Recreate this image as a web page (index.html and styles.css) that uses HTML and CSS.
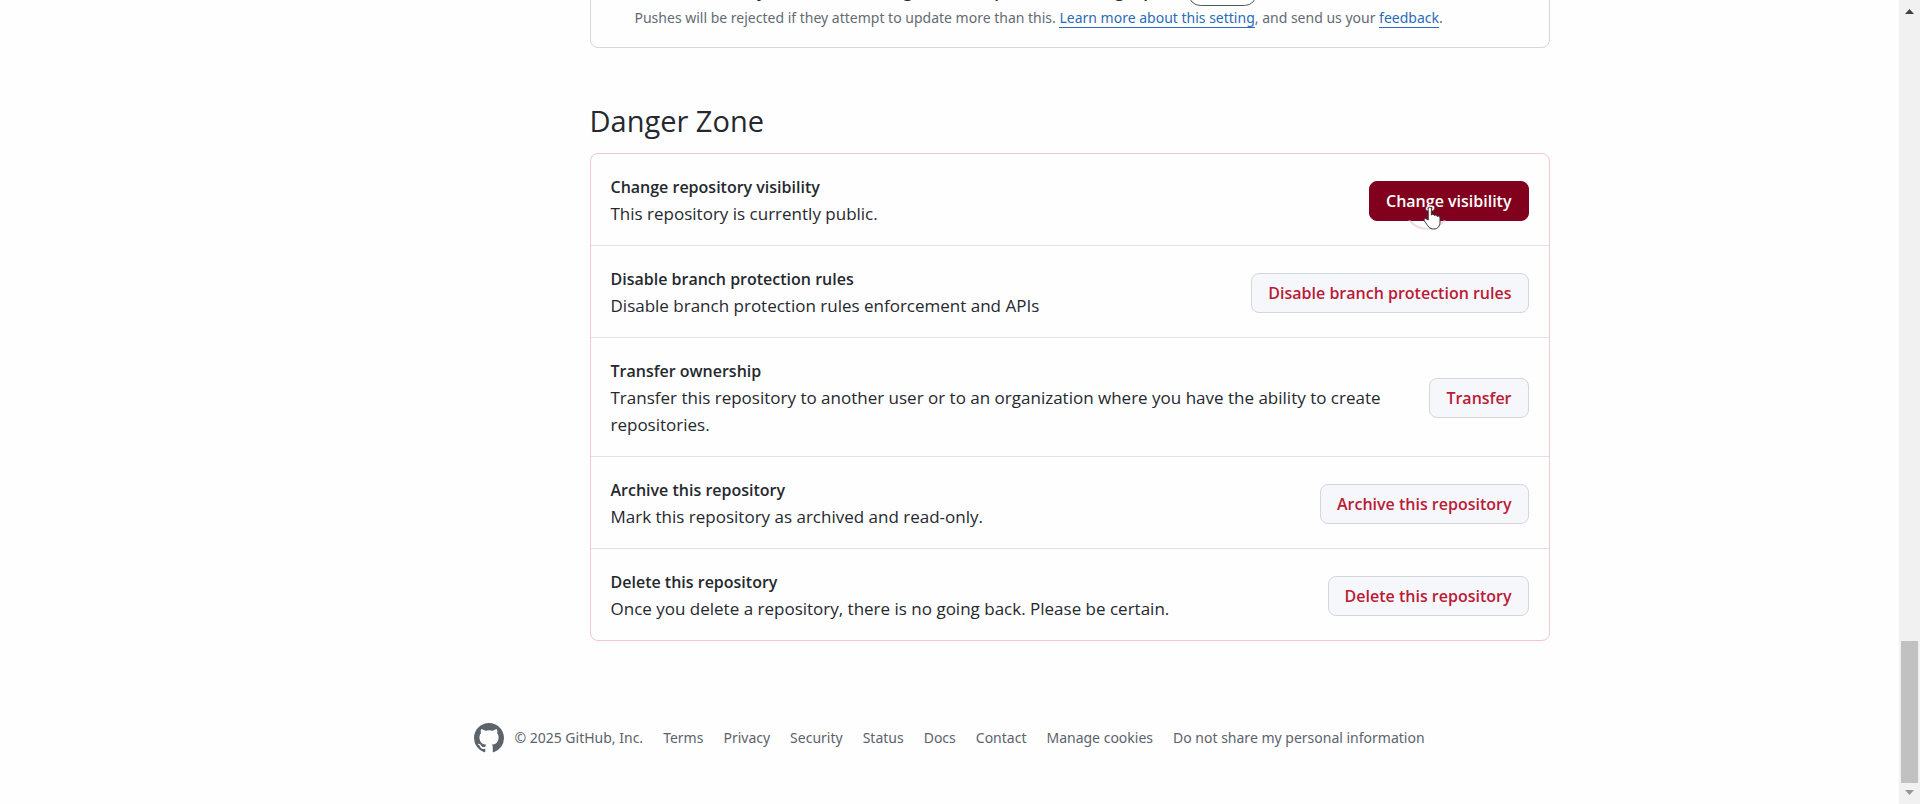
FILE: index.html
```html
<!DOCTYPE html>
<html lang="en">
<head>
<meta charset="utf-8">
<title>Settings</title>
<link rel="stylesheet" href="styles.css">
</head>
<body>
<div class="page">
  <div class="container">
    <main class="settings">
      <section class="push-card">
        <div class="push-head">
          <h3 class="push-title">Limit how many branches and tags can be updated in a single push</h3>
          <span class="label">Preview</span>
        </div>
        <p class="push-note">Pushes will be rejected if they attempt to update more than this. <a class="link" href="#">Learn more about this setting</a>, and send us your <a class="link" href="#">feedback</a>.</p>
      </section>
      <h2 class="heading">Danger Zone</h2>
      <ul class="danger">
        <li class="row">
          <div class="info"><strong class="name">Change repository visibility</strong><p class="desc">This repository is currently public.</p></div>
          <button class="btn btn-active" type="button">Change visibility
            <span class="ring"></span>
            <svg class="pointer" viewBox="0 0 18 24" aria-hidden="true"><path d="M5.200 14V3.200C5.200.6 8.400.6 8.400 3.200V9c.5-1.200 2.900-1 3 .6.700-1 2.700-.7 2.800.9.900-.8 2.800-.4 2.800 1.400v4.200c0 3.600-2 6.900-6.200 6.900-4.500 0-5.600-2.600-9.500-8.300-1-1.500 1-3 2.300-1.600z" fill="#fff" stroke="#333" stroke-width="1"/></svg>
          </button>
        </li>
        <li class="row">
          <div class="info"><strong class="name">Disable branch protection rules</strong><p class="desc">Disable branch protection rules enforcement and APIs</p></div>
          <button class="btn" type="button">Disable branch protection rules</button>
        </li>
        <li class="row">
          <div class="info"><strong class="name">Transfer ownership</strong><p class="desc">Transfer this repository to another user or to an organization where you have the ability to create repositories.</p></div>
          <button class="btn" type="button">Transfer</button>
        </li>
        <li class="row">
          <div class="info"><strong class="name">Archive this repository</strong><p class="desc">Mark this repository as archived and read-only.</p></div>
          <button class="btn" type="button">Archive this repository</button>
        </li>
        <li class="row">
          <div class="info"><strong class="name">Delete this repository</strong><p class="desc">Once you delete a repository, there is no going back. Please be certain.</p></div>
          <button class="btn" type="button">Delete this repository</button>
        </li>
      </ul>
    </main>
  </div>
  <footer class="footer">
    <div class="brand">
      <svg class="mark" viewBox="0 0 16 16" aria-hidden="true"><path fill="currentColor" d="M8 0c4.420 0 8 3.580 8 8a8.013 8.013 0 0 1-5.450 7.590c-.4.080-.55-.170-.55-.380 0-.270.010-1.130.010-2.200 0-.750-.250-1.230-.540-1.480 1.780-.2 3.650-.880 3.650-3.950 0-.880-.310-1.590-.820-2.150.080-.2.360-1.020-.080-2.120 0 0-.670-.220-2.200.820-.640-.180-1.320-.270-2-.270-.680 0-1.360.090-2 .270-1.530-1.030-2.200-.820-2.200-.820-.440 1.100-.160 1.920-.080 2.120-.510.560-.820 1.280-.820 2.150 0 3.060 1.860 3.750 3.640 3.950-.230.200-.440.550-.510 1.070-.460.210-1.610.550-2.330-.660-.150-.240-.6-.830-1.230-.820-.670.010-.270.380.010.530.340.190.730.900.820 1.130.160.450.680 1.310 2.690.940 0 .670.010 1.300.010 1.490 0 .210-.150.450-.550.380A7.995 7.995 0 0 1 0 8c0-4.420 3.580-8 8-8Z"/></svg>
      <span>© 2025 GitHub, Inc.</span>
    </div>
    <nav class="footer-nav">
      <a href="#">Terms</a><a href="#">Privacy</a><a href="#">Security</a><a href="#">Status</a><a href="#">Docs</a><a href="#">Contact</a><a href="#">Manage cookies</a><a href="#">Do not share my personal information</a>
    </nav>
  </footer>
</div>
<div class="scrollbar" aria-hidden="true">
  <svg class="arrow" viewBox="0 0 9 5"><path d="M4.500 0 9 5H0z" fill="#434143"/></svg>
  <div class="track"><div class="thumb"></div></div>
  <svg class="arrow" viewBox="0 0 9 5"><path d="M0 0h9L4.500 5z" fill="#989598"/></svg>
</div>
</body>
</html>
```
FILE: styles.css
```css
* { box-sizing: border-box; }

body {
  display: flex;
  height: 100vh;
  margin: 0;
  overflow: hidden;
  background: #fefefe;
  color: #25292e;
  font-family: "Open Sans", "Noto Sans", sans-serif;
  font-size: 17px;
  line-height: 26px;
}

h2, h3, p, ul { margin: 0; padding: 0; }

.page { flex: 1; min-width: 0; overflow: hidden; }

.container { max-width: 1200px; margin: 0 auto; padding-left: 240px; }

/* The page is scrolled so that only the foot of this card shows. */
.push-card {
  margin-top: -61px;
  padding: 40px 20px 18px 44px;
  border: 1px solid #d3d7dc;
  border-radius: 8px;
}

.push-head { display: flex; align-items: flex-end; gap: 4px; white-space: nowrap; }

.push-title { padding-bottom: 4px; font-size: 17px; line-height: 22px; font-weight: 600; }

.label {
  padding: 0 8px;
  border: 1px solid #466050;
  border-radius: 24px;
  font-size: 14px;
  line-height: 23px;
  font-weight: 500;
}

.push-note {
  padding-top: 1px;
  color: #646b73;
  font-family: "Noto Sans", sans-serif;
  font-size: 14px;
  line-height: 22px;
}

.link { color: #2a6cb8; text-decoration: none; border-bottom: 1px solid #2a6cb8; }

.heading { margin: 51px 0 11px; font-size: 29px; line-height: 43px; font-weight: 400; }

.danger {
  list-style: none;
  border: 1px solid #f3c6d0;
  border-radius: 8px;
}

.row {
  display: flex;
  align-items: center;
  justify-content: space-between;
  gap: 20px;
  padding: 20px 20px 18px;
}

.row + .row { border-top: 1px solid #e0e2e5; }

.info { flex: 1; }
.name { display: block; font-size: 16px; font-weight: 600; }
.desc { line-height: 27px; }

.btn {
  position: relative;
  height: 40px;
  padding: 0 16px;
  border: 1px solid #d3d6db;
  border-radius: 8px;
  background: #f6f7fa;
  color: #bb1b37;
  font: inherit;
  font-size: 16px;
  font-weight: 600;
  line-height: 24px;
  white-space: nowrap;
}

.btn-active { border-color: #80001d; background: #80001d; color: #fff; }

.pointer { position: absolute; right: 87px; top: 24px; width: 18px; height: 24px; }

.ring {
  position: absolute;
  right: 78px;
  top: 2px;
  width: 46px;
  height: 46px;
  border: 2px solid #f3d6e9;
  border-radius: 50%;
  clip-path: inset(37px 0 0);
}

.footer {
  display: flex;
  align-items: center;
  justify-content: center;
  gap: 20px;
  margin-top: 80px;
  color: #5c636b;
  font-family: "Noto Sans", sans-serif;
  font-size: 14px;
  line-height: 34px;
}

.brand { display: flex; align-items: center; gap: 10px; }
.mark { width: 30px; height: 30px; }
.footer-nav { display: flex; gap: 20px; }
.footer-nav a { color: inherit; text-decoration: none; }

.scrollbar {
  display: flex;
  flex-direction: column;
  align-items: center;
  width: 21px;
  padding: 9px 2px;
  background: #f1f1f1;
}

.arrow { width: 9px; height: 5px; }

.track {
  display: flex;
  flex: 1;
  flex-direction: column;
  justify-content: flex-end;
  width: 100%;
  padding: 7px 0;
}

.thumb { height: 142px; background: #c1c1c1; }
```
